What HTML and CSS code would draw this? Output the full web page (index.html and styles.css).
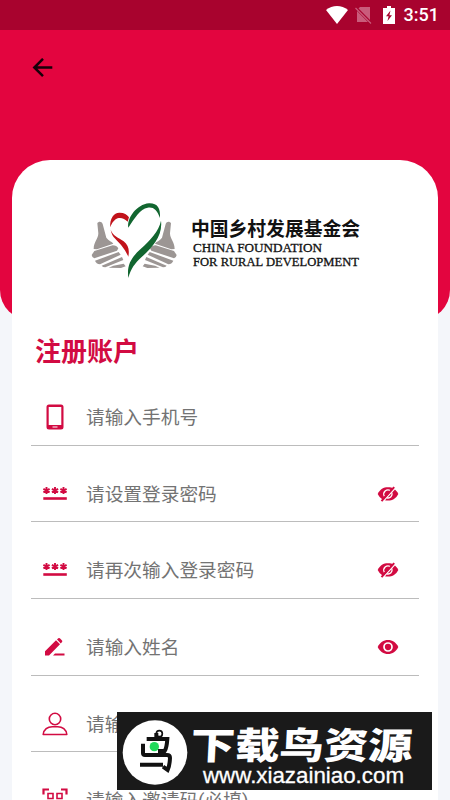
FILE: index.html
```html
<!DOCTYPE html>
<html lang="zh-CN">

<head>
  <meta charset="UTF-8">
  <meta name="viewport" content="width=device-width, initial-scale=1.0">
  <title>注册账户</title>
  <link rel="stylesheet" href="styles.css">
</head>

<body>
  <svg class="sprite" aria-hidden="true">
    <symbol id="password" viewBox="0 0 26 16">
      <g stroke="currentColor" stroke-width="1.9">
        <path d="M4.5 1v7M1.400 2.800l6.200 3.500M7.600 2.800L1.400 6.300" />
        <path d="M13 1v7M9.900 2.800l6.200 3.500M16.100 2.800L9.900 6.300" />
        <path d="M21.500 1v7M18.400 2.800l6.200 3.500M24.600 2.800l-6.200 3.500" />
      </g>
      <path d="M1.300 11.200h23.500v2.600h-23.500z" fill="currentColor" />
    </symbol>
    <symbol id="eye" viewBox="0 0 22 16">
      <path d="M.7 8C3 3.200 6.500 1 11 1s8 2.200 10.300 7c-2.300 4.800-5.800 7-10.300 7S3 12.800.7 8z" fill="currentColor" />
      <circle cx="11" cy="8" r="4" fill="none" stroke="#fff" stroke-width="1.700" />
    </symbol>
    <symbol id="eye-off" viewBox="0 0 22 16">
      <path d="M.7 8C3 3.200 6.500 1.300 11 1.300S19 3.200 21.300 8c-2.300 4.600-5.800 6.500-10.300 6.500S3 12.600.7 8z" fill="currentColor" />
      <path d="M7.300 10.200A4.300 4.300 0 0 1 13.300 4.500M14.900 6.800a4 4 0 0 1-4.900 5" fill="none" stroke="#fff" stroke-width="1.300" />
      <path d="M5.500 16L19 1.200" stroke="#fff" stroke-width="1.500" />
      <path d="M4.500 15.200L17.200 1.200" stroke="currentColor" stroke-width="2" />
    </symbol>
    <symbol id="hand" viewBox="0 0 150 270">
      <path d="M37 85c4-7 13-6 16 2l11 41c7 10 17 11 21 18l-49 17-10-1c0-22 14-30 14-47z" />
      <path d="M20 180l8-12 55-17c8 0 14 4 17 9l-4 7-68 23q-7-2-8-10z" />
      <path d="M30 197l71-26 6 8-62 29q-12-2-15-11z" />
      <path d="M50 212l61-26 4 9-54 22q-8 0-11-5z" />
      <path d="M71 218l14-6 31-6 6 8-14 5z" />
    </symbol>
  </svg>

  <div class="status">
    <svg class="status__wifi" width="22" height="18" viewBox="0 0 22 18">
      <path d="M0 4C6.500-1.300 15.500-1.300 22 4L11 18z" fill="#fff" />
    </svg>
    <svg class="status__sim" width="17" height="18" viewBox="0 0 17 18">
      <path d="M5 1h10v15H2V4z" fill="#c95c7b" />
      <path d="M.5 1.500L16 17" stroke="#a8032e" stroke-width="3" />
      <path d="M.5 2L16 17.500" stroke="#c95c7b" stroke-width="1.300" />
    </svg>
    <svg class="status__battery" width="12" height="18" viewBox="0 0 12 18">
      <path d="M4 0h4v2h4v16H0V2h4z" fill="#fff" />
      <path d="M7.500 4.500L3 10.300h2.600L4.500 15 9 9.200H6.400z" fill="#a8032e" />
    </svg>
    <span class="status__time">3:51</span>
  </div>

  <header class="header">
    <a href="#" class="header__back">
      <svg width="22" height="20" viewBox="0 0 22 20">
        <path d="M20.300 9.500H3M11 .8L2.300 9.500l8.700 8.700" fill="none" stroke="#160009" stroke-width="2.500" />
      </svg>
    </a>
  </header>

  <main class="card">
    <svg class="logo" width="274" height="80" viewBox="90 200 274 80">
      <g transform="translate(85 195) scale(.3333)">
        <g fill="#9c9694">
          <use href="#hand" width="150" height="270" />
          <use href="#hand" width="150" height="270" transform="translate(295 0) scale(-1 1)" />
        </g>
        <path d="M76 97C73 70 88 52 104 53c14 0 22 6 28 14l-4 13C118 69 102 65 92 73c-8 6-13 14-16 24z" fill="#c1131b" />
        <path d="M77 104c4 25 20 30 33 48 8 10 14 20 20 33 4-21 0-34-14-46-16-12-32-16-39-35z" fill="#c1131b" />
        <path d="M130 98c-5-28 25-70 62-73 25-1 35 14 33 44-9-25-20-34-37-31-23 4-38 30-58 60z" fill="#126630" />
        <path d="M228 77c-6 31-32 58-62 86-28 26-41 47-36 86 7-27 20-45 40-63 32-28 64-64 58-109z" fill="#126630" />
      </g>
      <text class="logo__name" x="191" y="235.500" textLength="169" lengthAdjust="spacingAndGlyphs">中国乡村发展基金会</text>
      <text class="logo__latin" x="193" y="252" textLength="129" lengthAdjust="spacingAndGlyphs">CHINA FOUNDATION</text>
      <text class="logo__latin" x="193" y="266" textLength="166" lengthAdjust="spacingAndGlyphs">FOR RURAL DEVELOPMENT</text>
    </svg>

    <h1 class="card__title">注册账户</h1>

    <ul class="form">
      <li class="form__row">
        <span class="form__icon">
          <svg width="20" height="26" viewBox="0 0 20 26">
            <path d="M4 .5h12a2.500 2.500 0 0 1 2.500 2.500v20a2.500 2.500 0 0 1-2.500 2.500H4A2.500 2.500 0 0 1 1.500 23V3A2.500 2.500 0 0 1 4 .5zM3.700 3v18h12.600V3zM7.500 22.600v1h5v-1z" fill="currentColor" fill-rule="evenodd" />
          </svg>
        </span>
        <span class="form__label">请输入手机号</span>
      </li>
      <li class="form__row">
        <span class="form__icon"><svg width="26" height="16"><use href="#password" /></svg></span>
        <span class="form__label">请设置登录密码</span>
        <svg class="form__eye" width="22" height="16"><use href="#eye-off" /></svg>
      </li>
      <li class="form__row">
        <span class="form__icon"><svg width="26" height="16"><use href="#password" /></svg></span>
        <span class="form__label">请再次输入登录密码</span>
        <svg class="form__eye" width="22" height="16"><use href="#eye-off" /></svg>
      </li>
      <li class="form__row">
        <span class="form__icon">
          <svg width="22" height="18" viewBox="0 0 22 18">
            <path d="M1 13.300L12 2.300l4 4L5 17.500H1zM13 1.500l1-1a1.500 1.500 0 0 1 2.100 0l1.700 1.700a1.500 1.500 0 0 1 0 2.100l-1 1.100zM11 15.600h9.500v1.900H9z" fill="currentColor" />
          </svg>
        </span>
        <span class="form__label">请输入姓名</span>
        <svg class="form__eye" width="22" height="16"><use href="#eye" /></svg>
      </li>
      <li class="form__row">
        <span class="form__icon">
          <svg width="26" height="24" viewBox="0 0 26 24" fill="none" stroke="currentColor" stroke-width="1.600">
            <circle cx="13" cy="7" r="5.700" />
            <path d="M1.200 22.500c.5-5 4.500-7.800 9-7.800h5.600c4.500 0 8.500 2.800 9 7.800z" stroke-linejoin="round" />
          </svg>
        </span>
        <span class="form__label">请输入身份证号</span>
      </li>
      <li class="form__row">
        <span class="form__icon">
          <svg width="26" height="24" viewBox="0 0 26 24" fill="none" stroke="currentColor">
            <path d="M1.500 6.500v-5h5.500M19 1.500h5.500v5M1.500 17.500v5h5.500M19 22.500h5.500v-5" stroke-width="2.200" />
            <path d="M6 5.500h5v5H6zM15 5.500h5v5h-5zM6 13.500h5v5H6zM15 13.500h5v5h-5z" stroke-width="1.600" />
          </svg>
        </span>
        <span class="form__label">请输入邀请码(必填)</span>
      </li>
    </ul>
  </main>

  <div class="banner">
    <svg width="315" height="78" viewBox="117 712 315 78">
      <circle cx="155" cy="752.500" r="32.300" fill="#fff" />
      <g transform="translate(110 700) scale(.3333)">
        <g fill="none" stroke="#111" stroke-width="12">
          <path d="M139 119v-20M110 117h62q-2 28-8 36h-20" />
          <path d="M99 131v29q0 5 6 5h66q9 0 9 9-1 23-7 36l-14-10M90 194h69" />
          <circle cx="148" cy="101" r="9" stroke-width="5" />
        </g>
        <circle cx="133" cy="140" r="14" fill="#20d95b" />
      </g>
      <text class="banner__name" transform="translate(190 758.500) skewX(-3) scale(1 .84)" textLength="222" lengthAdjust="spacingAndGlyphs">下载鸟资源</text>
      <text class="banner__url" x="203" y="783" textLength="201" lengthAdjust="spacingAndGlyphs">www.xiazainiao.com</text>
    </svg>
  </div>
</body>

</html>
```

FILE: styles.css
```css
* {
  margin: 0;
  padding: 0;
  box-sizing: border-box;
}

body {
  position: relative;
  width: 450px;
  height: 800px;
  overflow: hidden;
  background-color: #f4f6fa;
  font-family: Roboto, 'Noto Sans CJK SC', sans-serif;
}

li {
  list-style-type: none;
}

svg {
  display: block;
  flex-shrink: 0;
}

.sprite {
  display: none;
}

/* STATUS BAR */
.status {
  display: flex;
  align-items: center;
  justify-content: flex-end;
  height: 30px;
  padding-right: 11px;
  background-color: #a8032e;
}

.status__sim {
  margin-left: 7px;
}

.status__battery {
  margin-left: 11px;
}

.status__time {
  margin-left: 9px;
  font-size: 18px;
  font-weight: 500;
  line-height: 32px;
  color: #fff;
}

/* HEADER */
.header {
  height: 290px;
  padding: 28px 32px;
  border-radius: 0 0 30px 30px;
  background-color: #e3053f;
}

.header__back {
  display: block;
  width: 22px;
}

/* CARD */
.card {
  height: 640px;
  margin: -160px 12px 0;
  padding: 40px 19px 0;
  overflow: hidden;
  border-radius: 38px 38px 0 0;
  background-color: #fff;
  color: #d20b42;
}

.logo {
  margin-left: 59px;
}

.logo__name {
  font-family: 'Noto Sans CJK SC', sans-serif;
  font-size: 19px;
  font-weight: 700;
  fill: #111;
}

.logo__latin {
  font-family: 'Liberation Serif', serif;
  font-size: 12.5px;
  fill: #111;
  stroke: #111;
  stroke-width: 0.3px;
}

.card__title {
  height: 40px;
  margin: 52px 0 0 4px;
  font-size: 26px;
  font-weight: 700;
  line-height: 40px;
}

.form {
  margin-top: -3px;
}

.form__row {
  display: flex;
  align-items: center;
  height: 76.7px;
  padding-top: 20px;
  border-bottom: 1px solid #bcbcbc;
}

.form__icon {
  display: flex;
  justify-content: center;
  width: 48px;
}

.form__label {
  flex: 1;
  margin-left: 7px;
  padding-top: 2px;
  font-size: 18.7px;
  line-height: 28px;
  color: #737373;
}

.form__eye {
  margin-right: 20px;
}

/* BANNER */
.banner {
  position: absolute;
  top: 712px;
  left: 117px;
  background-color: #1a1a1a;
}

.banner__name {
  font-family: 'Noto Sans CJK SC', sans-serif;
  font-size: 44px;
  font-weight: 900;
  fill: #fff;
}

.banner__url {
  font-family: 'Liberation Sans', sans-serif;
  font-size: 22px;
  fill: #fff;
  stroke: #fff;
  stroke-width: 0.3px;
}
```
